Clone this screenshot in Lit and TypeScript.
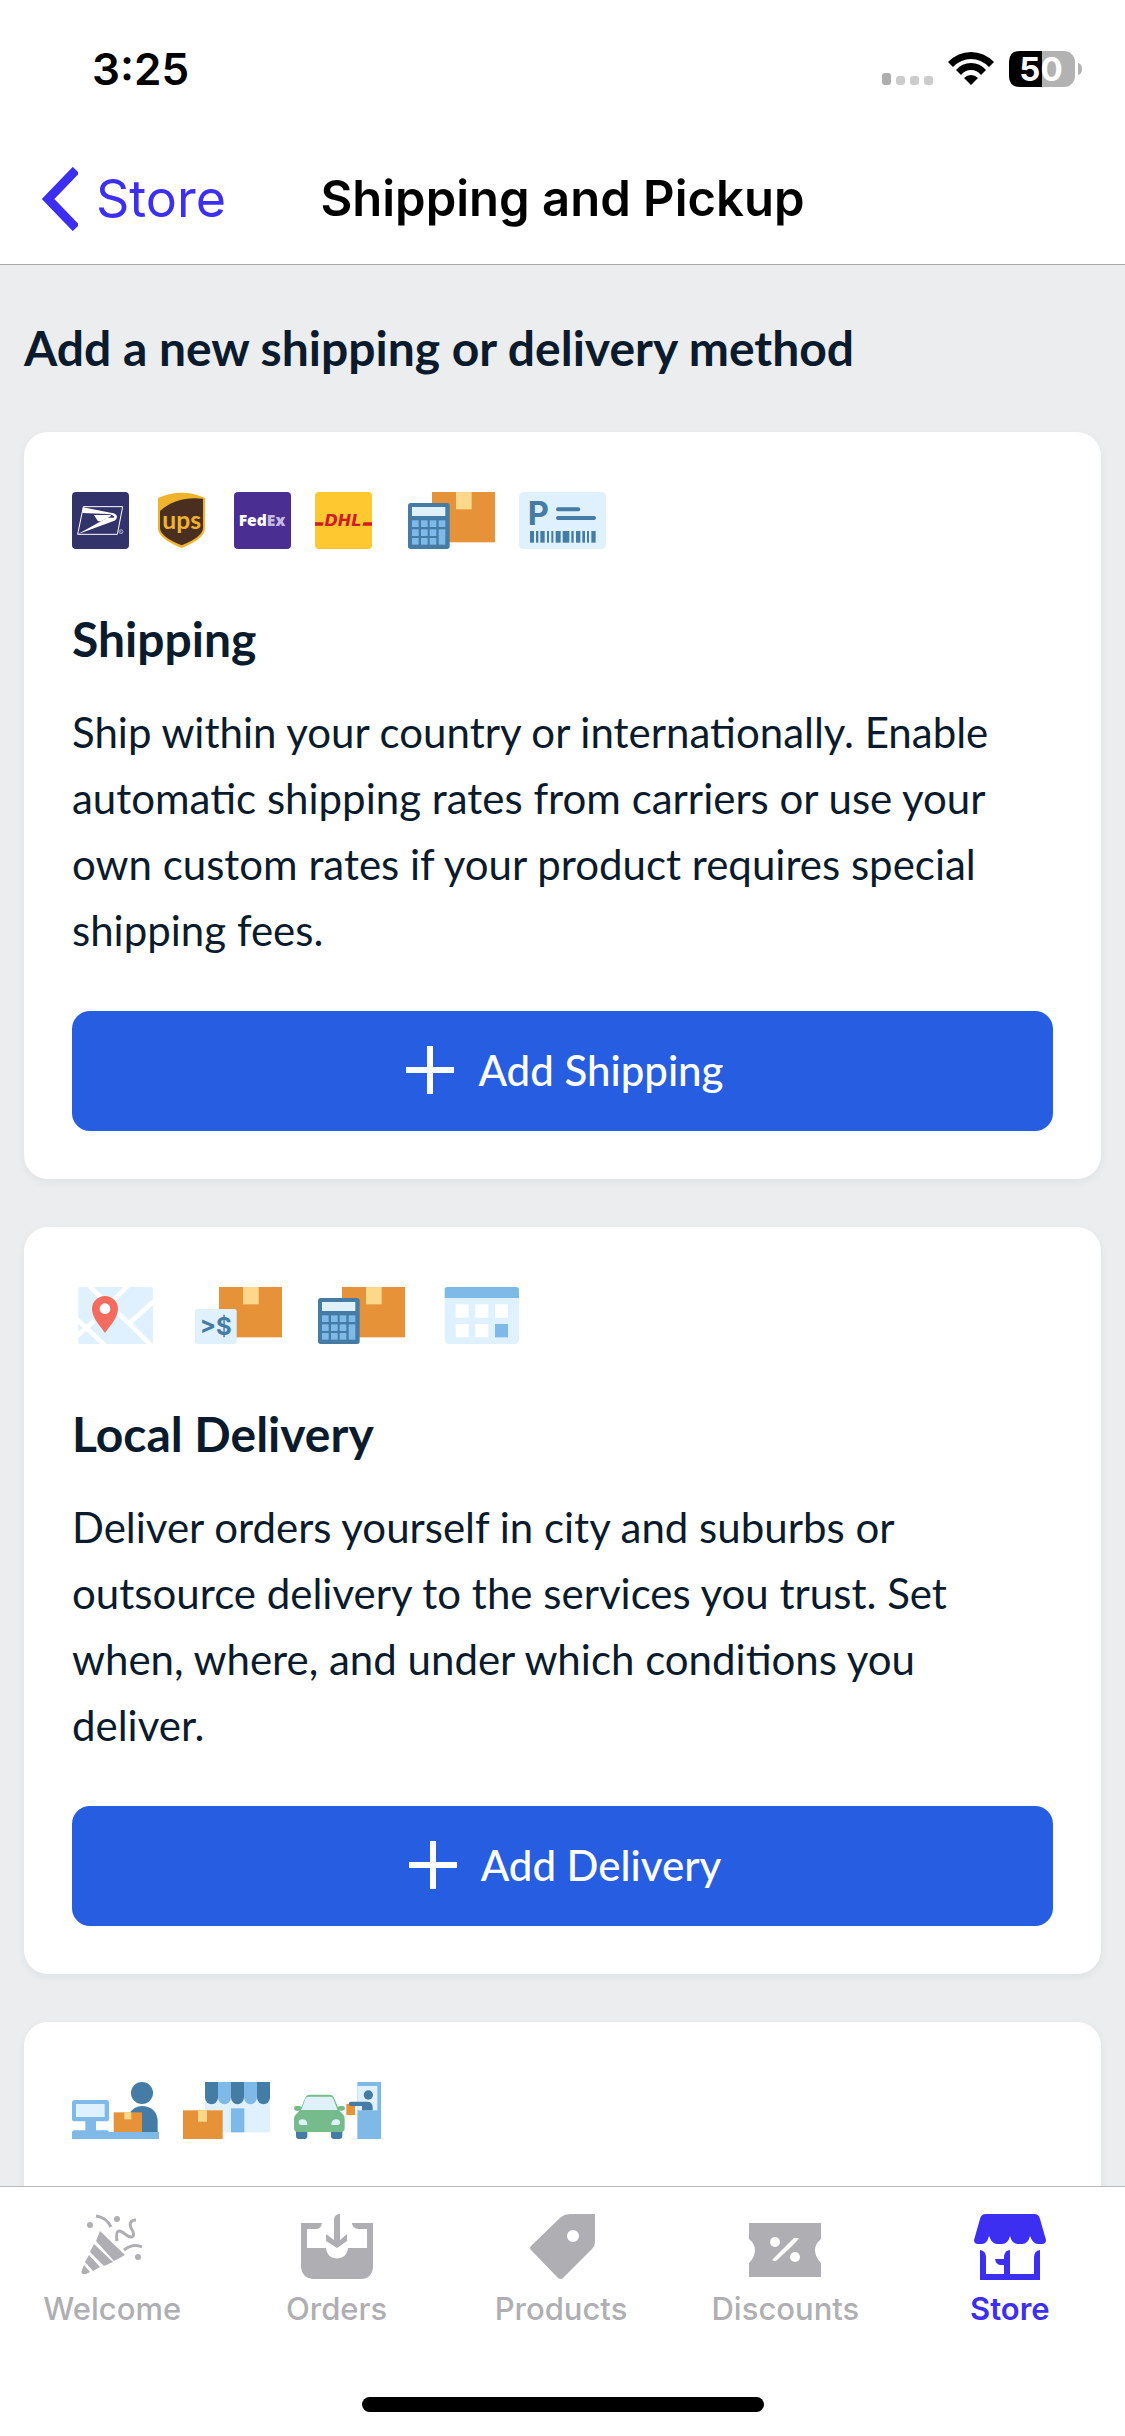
import { LitElement, html, css, svg, nothing, type SVGTemplateResult, type TemplateResult } from "lit";
import { customElement, property } from "lit/decorators.js";

const C = {
  orange: "#e69238",
  tape: "#fbd88a",
  dark: "#457ca5",
  mid: "#7eb9e7",
  light: "#dff1fe",
  green: "#76bb8c",
};

/* Illustrations are drawn on a grid three times finer than their display size. */
const parcel = svg`
  <rect x="72" width="189" height="151" fill=${C.orange} />
  <rect x="144" width="47" height="52" fill=${C.tape} />`;

const keyColumns = [12, 39, 65, 92];
const keyRows = [85, 112, 138];
const calculatorParcel = svg`
  ${parcel}
  <rect y="33" width="125" height="138" rx="8" fill=${C.dark} />
  <rect x="12" y="45" width="100" height="27" fill=${C.light} />
  ${keyRows.map((y, r) =>
    keyColumns.map((x, c) =>
      c === 3 && r > 0
        ? nothing
        : svg`<rect x=${x} y=${y} width="20" height="20" fill=${C.mid} />`
    )
  )}
  <rect x="92" y="112" width="20" height="46" fill=${C.mid} />`;

const barcode = [
  [33, 12], [51, 7], [64, 13], [84, 6], [97, 6], [110, 15], [131, 20],
  [157, 7], [171, 13], [190, 8], [204, 6], [217, 13],
];

const art: Record<string, { w: number; label: string; body: SVGTemplateResult }> = {
  usps: {
    w: 171,
    label: "USPS",
    body: svg`
      <rect width="171" height="171" rx="12" fill="#33336b" />
      <path d="M34 44H152L136 127H17Z" fill="none" stroke="#fff" stroke-width="3" />
      <path d="M33 46L116 62Q134 64 135 74Q135 82 127 86L17 127L106 77H122Q128 77 126 73Q122 67 104 66L31 63Z" fill="#fff" />
      <path d="M66 69H112Q122 71 112 75L86 88H78Z" fill="#fff" />
      <circle cx="147" cy="119" r="6" fill="none" stroke="#d0d0e4" stroke-width="2" />
      <path d="M145 123V115H148Q150 117 148 119H145M147 119L150 123" fill="none" stroke="#d0d0e4" stroke-width="1" />`,
  },
  ups: {
    w: 171,
    label: "UPS",
    body: svg`
      <path d="M15 18Q86 -14 156 18V108Q156 140 86 168Q15 140 15 108Z" fill="#f0b32c" />
      <path d="M21 57Q70 12 150 20V108Q150 134 86 160Q21 134 21 108Z" fill="#4a2f20" />
      <text x="86" y="110" text-anchor="middle" font-family="Lato,sans-serif" font-weight="700" font-size="74" fill="#f0b32c">ups</text>`,
  },
  fedex: {
    w: 171,
    label: "FedEx",
    body: svg`
      <rect width="171" height="171" rx="12" fill="#4b2e92" />
      <text x="84" y="103" text-anchor="middle" font-family="'Open Sans',sans-serif" font-weight="800" font-size="47" fill="#fff">Fed<tspan fill="#c5b9e2">Ex</tspan></text>`,
  },
  dhl: {
    w: 171,
    label: "DHL",
    body: svg`
      <rect width="171" height="171" rx="12" fill="#fdc830" />
      <path d="M0 91H26L23 101H0ZM146 91H171V101H142Z" fill="#d01c1f" />
      <text x="84" y="101" text-anchor="middle" font-family="'DejaVu Sans',sans-serif" font-style="italic" font-weight="700" font-size="48" fill="#d01c1f">DHL</text>`,
  },
  calculator: { w: 261, label: "Calculated rates", body: calculatorParcel },
  postage: {
    w: 261,
    label: "Postage label",
    body: svg`
      <rect width="261" height="171" rx="14" fill=${C.light} />
      <text x="26" y="98" font-family="Inter,sans-serif" font-weight="700" font-size="98" fill=${C.dark}>P</text>
      <path d="M117 52H178M117 78H225" stroke=${C.dark} stroke-width="12" stroke-linecap="round" />
      ${barcode.map(([x, w]) => svg`<rect x=${x} y="117" width=${w} height="35" fill=${C.dark} />`)}`,
  },
  map: {
    w: 261,
    label: "Delivery zone",
    body: svg`
      <rect x="19" width="224" height="171" rx="6" fill=${C.light} />
      <path d="M52 -2L106 48L172 110L236 174M168 -4L120 44M246 42L173 108M14 96L100 176M14 148L66 102" stroke="#fff" stroke-width="14" fill="none" />
      <path d="M99 138C84 116 60 92 60 66A39 39 0 0 1 138 66C138 92 114 116 99 138Z" fill="#f36c5f" />
      <circle cx="99" cy="65" r="16" fill="#fff" />`,
  },
  price: {
    w: 261,
    label: "Rates by subtotal",
    body: svg`
      ${parcel}
      <rect y="66" width="125" height="105" rx="7" fill=${C.light} />
      <text x="62" y="144" text-anchor="middle" font-family="Inter,sans-serif" font-weight="700" font-size="72" fill=${C.dark}>&gt;$</text>`,
  },
  calendar: {
    w: 261,
    label: "Delivery schedule",
    body: svg`
      <path d="M11 30H234V157Q234 171 220 171H25Q11 171 11 157Z" fill=${C.light} />
      <path d="M11 33V8Q11 0 19 0H226Q234 0 234 8V33Z" fill=${C.mid} />
      ${[52, 111].map((y, r) =>
        [44, 103, 162].map(
          (x, c) => svg`<rect x=${x} y=${y} width="39" height="40" fill=${r + c === 3 ? C.mid : "#fff"} />`
        )
      )}`,
  },
  counter: {
    w: 261,
    label: "Pickup at the counter",
    body: svg`
      <rect y="54" width="111" height="64" rx="8" fill=${C.mid} />
      <rect x="12" y="66" width="86" height="39" fill=${C.light} />
      <path d="M40 116H72V145H105Q111 145 111 151H0Q0 145 8 145H40Z" fill=${C.mid} />
      <circle cx="210" cy="33" r="33" fill=${C.dark} />
      <path d="M172 96Q184 72 212 72Q257 76 257 120V152H172Z" fill=${C.dark} />
      <rect x="125" y="91" width="85" height="60" fill=${C.orange} />
      <rect x="157" y="91" width="21" height="21" fill=${C.tape} />
      <rect y="150" width="261" height="21" fill=${C.mid} />`,
  },
  shop: {
    w: 261,
    label: "Pickup at the shop",
    body: svg`
      <rect x="66" width="195" height="151" fill=${C.light} />
      <rect x="144" y="79" width="40" height="72" fill=${C.mid} />
      ${[0, 1, 2, 3, 4].map((i) => {
        const x = 66 + i * 39;
        return svg`<path d=${`M${x} 0h39v46a19 20 0 0 1 -39 0Z`} fill=${i % 2 ? C.mid : C.dark} />`;
      })}
      <rect y="85" width="119" height="86" fill=${C.orange} />
      <rect x="45" y="85" width="27" height="34" fill=${C.tape} />`,
  },
  curbside: {
    w: 261,
    label: "Curbside pickup",
    body: svg`
      <rect x="6" y="140" width="34" height="31" rx="9" fill=${C.dark} />
      <rect x="111" y="140" width="34" height="31" rx="9" fill=${C.dark} />
      <path d="M16 88L34 47Q38 38 46 38H108Q116 38 120 47L137 88Z" fill=${C.green} />
      <path d="M21 85L34 51Q37 44 44 44H109Q116 44 118 51L131 85Z" fill=${C.light} />
      <rect y="72" width="22" height="14" rx="7" fill=${C.green} />
      <rect x="131" y="72" width="22" height="14" rx="7" fill=${C.green} />
      <path d="M18 84H134L148 98Q152 102 152 110V138Q152 150 140 150H12Q0 150 0 138V110Q0 102 5 98Z" fill=${C.green} />
      <path d="M14 124Q13 111 26 112Q40 113 40 129H24Q15 130 14 124ZM138 124Q139 111 126 112Q112 113 112 129H128Q137 130 138 124Z" fill=${C.light} />
      <rect x="190" width="71" height="171" fill=${C.mid} />
      <rect x="190" y="12" width="60" height="73" fill=${C.light} />
      <rect x="157" y="66" width="26" height="33" fill=${C.orange} />
      <circle cx="223" cy="39" r="14" fill=${C.dark} />
      <path d="M171 59H222Q236 61 236 76V85H204V72H171A6 6 0 0 1 171 59Z" fill=${C.dark} />`,
  },
};

const tabIcons: Record<string, SVGTemplateResult> = {
  Welcome: svg`
    <path d="M24 20L49 44L38 50L20 30ZM18 33L37 51L28 55L14 41ZM13 44L24 56L17 60L9 51ZM8 54L14 61L10 63Q4 64 6 59Z" fill="currentColor" />
    <circle cx="14" cy="14" r="3" fill="currentColor" />
    <circle cx="41" cy="8" r="3" fill="currentColor" />
    <circle cx="62" cy="46" r="3" fill="currentColor" />
    <path d="M20 5Q30 6 35 16M41 30C39 17 44 19 49 23C57 29 60 25 55 17C53 12 55 9 60 9M48 39Q57 32 66 36" fill="none" stroke="currentColor" stroke-width="3" />`,
  Orders: svg`
    <path d="M0 12H21Q20 18 15 18H6V37H25C26 51 46 51 47 37H66V18H57Q51 17 51 12H72V56Q71 68 60 68H12Q1 67 0 56Z" fill="currentColor" />
    <path d="M33 8Q34 3 39 3V29L46 23V30L36 37L25 30V23L33 29Z" fill="currentColor" />`,
  Products: svg`
    <path fill-rule="evenodd" d="M70 3V31Q70 35 67 38L38 67Q36 69 33 67L6 39Q4 37 6 35L36 6Q40 3 45 3ZM48 19A6 6 0 1 0 48 31A6 6 0 1 0 48 19Z" fill="currentColor" />`,
  Discounts: svg`
    <path d="M0 12H72V28Q66 33 66 39Q66 46 72 52V66H0V52Q6 46 6 39Q6 33 0 28Z" fill="currentColor" />
    <circle cx="26" cy="31" r="5" fill="#fff" />
    <circle cx="46" cy="46" r="5" fill="#fff" />
    <path d="M23 49L45 27H50Q49 30 28 49Q26 51 23 49Z" fill="#fff" />`,
  Store: svg`
    <path d="M12 3H60Q65 3 66 8L72 29Q72 33 68 33H64Q59 33 56 25Q54 33 48 33H44Q38 33 36 25Q34 33 28 33H23Q18 33 15 25Q13 33 8 33H4Q0 33 0 29L6 8Q7 3 12 3Z" fill="currentColor" />
    <path d="M6 39Q12 40 12 46V63H30V54H27Q22 54 21 48H30V45Q31 39 36 39V63H60V46Q60 40 66 39V69H6Z" fill="currentColor" />`,
};

@customElement("status-bar")
class StatusBar extends LitElement {
  static styles = css`
    :host {
      display: flex;
      align-items: center;
      justify-content: space-between;
      height: 126px;
      padding: 6px 43px 0 92px;
      color: #000;
    }
    .time {
      font-size: 44px;
      line-height: 54px;
      font-weight: 600;
    }
    .signals {
      display: flex;
      align-items: center;
      gap: 15px;
    }
    svg {
      display: block;
    }
  `;

  render() {
    return html`
      <span class="time">3:25</span>
      <div class="signals">
        <svg width="51" height="36" viewBox="0 0 51 36" role="img" aria-label="No signal">
          <rect y="22" width="9" height="12" rx="3" fill="#aeaeae" />
          <rect x="14" y="25" width="9" height="9" rx="3" fill="#cccccc" />
          <rect x="28" y="25" width="9" height="9" rx="3" fill="#cccccc" />
          <rect x="42" y="25" width="9" height="9" rx="3" fill="#cccccc" />
        </svg>
        <svg width="46" height="36" viewBox="0 0 46 36" role="img" aria-label="Wi-Fi">
          <path d="M0 11Q10 1 23 1T46 11L41 16Q33 8 23 8T5 16Z" />
          <path d="M8 19Q14 12 23 12T38 19L33 24Q29 19 23 19T13 24Z" />
          <path d="M16 27Q19 24 23 24T30 27L23 34Z" />
        </svg>
        <svg width="73" height="52" viewBox="0 -8 73 52" role="img" aria-label="Battery 50 percent">
          <rect width="66" height="36" rx="11" fill="#b2b2b2" />
          <path d="M11 0H33V36H11Q0 36 0 25V11Q0 0 11 0Z" />
          <path d="M69 12Q73 13 73 18T69 24Z" fill="#b2b2b2" />
          <text x="32" y="30" text-anchor="middle" font-family="Inter,sans-serif" font-weight="700" font-size="33" fill="#fff">50</text>
        </svg>
      </div>
    `;
  }
}

@customElement("nav-header")
class NavHeader extends LitElement {
  static styles = css`
    :host {
      display: grid;
      grid-template-columns: 1fr auto 1fr;
      align-items: center;
      height: 130px;
      padding: 2px 40px 0;
      border-bottom: 1px solid #a9a9ab;
    }
    .back {
      display: flex;
      align-items: center;
      gap: 18px;
      color: #3d2ff2;
      font-size: 52px;
      line-height: 62px;
      text-decoration: none;
    }
    .title {
      margin: 0;
      font-size: 49px;
      line-height: 62px;
      font-weight: 600;
      color: #000;
    }
  `;

  render() {
    return html`
      <a class="back" href="#store">
        <svg width="38" height="64" viewBox="0 0 38 64" aria-hidden="true">
          <path d="M36 3L8 32L36 61" fill="none" stroke="currentColor" stroke-width="9" />
        </svg>
        Store
      </a>
      <h1 class="title">Shipping and Pickup</h1>
    `;
  }
}

@customElement("method-card")
class MethodCard extends LitElement {
  @property() heading = "";
  @property() text = "";
  @property() action = "";
  @property({ attribute: false }) groups: string[][] = [];

  static styles = css`
    :host {
      display: block;
      padding: 60px 48px 48px;
      border-radius: 24px;
      background: #fff;
      box-shadow: 0 3px 9px rgba(40, 50, 50, 0.06);
    }
    .groups {
      display: flex;
      gap: 36px;
    }
    .group {
      display: flex;
      gap: 24px;
    }
    svg {
      display: block;
    }
    .heading {
      margin: 60px 0 30px;
      font-size: 48px;
      line-height: 60px;
      font-weight: 700;
    }
    .text {
      margin: 0 0 48px;
      font-size: 42px;
      line-height: 66px;
    }
    .action {
      display: flex;
      align-items: center;
      justify-content: center;
      gap: 24px;
      width: 100%;
      height: 120px;
      padding: 0 0 3px 5px;
      border: 0;
      border-radius: 18px;
      background: #275de0;
      color: #fff;
      font: inherit;
      font-size: 42px;
      font-weight: 500;
    }
  `;

  render(): TemplateResult {
    return html`
      <div class="groups">
        ${this.groups.map(
          (names) => html`<div class="group">
            ${names.map((name) => {
              const a = art[name];
              return html`<svg width=${a.w / 3} height="57" viewBox="0 0 ${a.w} 171" role="img" aria-label=${a.label}>
                ${a.body}
              </svg>`;
            })}
          </div>`
        )}
      </div>
      ${this.heading
        ? html`<h3 class="heading">${this.heading}</h3>
            <p class="text">${this.text}</p>
            <button class="action" type="button">
              <svg width="48" height="48" viewBox="0 0 48 48" aria-hidden="true">
                <path d="M24 0V48M0 24H48" stroke="currentColor" stroke-width="6" />
              </svg>
              ${this.action}
            </button>`
        : nothing}
    `;
  }
}

@customElement("tab-bar")
class TabBar extends LitElement {
  @property() active = "";

  static styles = css`
    :host {
      display: flex;
      flex-direction: column;
      align-items: center;
      gap: 70px;
      padding: 24px 0;
      border-top: 1px solid #b9bab9;
      background: #fff;
    }
    .tabs {
      display: grid;
      grid-template-columns: repeat(5, 1fr);
      align-self: stretch;
      padding-right: 3px;
    }
    .tab {
      display: flex;
      flex-direction: column;
      align-items: center;
      gap: 8px;
      color: #afafb3;
      font-size: 31px;
      line-height: 36px;
      font-weight: 500;
      text-decoration: none;
    }
    .tab.active {
      color: #3d2ff2;
      font-weight: 600;
    }
    .home {
      width: 402px;
      height: 15px;
      border-radius: 8px;
      background: #000;
    }
  `;

  render() {
    return html`
      <nav class="tabs">
        ${Object.entries(tabIcons).map(
          ([name, icon]) => html`<a
            class=${name === this.active ? "tab active" : "tab"}
            href="#${name.toLowerCase()}"
          >
            <svg width="72" height="72" viewBox="0 0 72 72" aria-hidden="true">${icon}</svg>
            ${name}
          </a>`
        )}
      </nav>
      <div class="home"></div>
    `;
  }
}

@customElement("app-root")
class AppRoot extends LitElement {
  static styles = css`
    :host {
      display: flex;
      flex-direction: column;
      height: 100vh;
      background: #fff;
      font-family: Inter, "Liberation Sans", sans-serif;
    }
    status-bar,
    nav-header,
    tab-bar {
      flex: none;
    }
    .content {
      flex: 1;
      min-height: 0;
      overflow-y: auto;
      scrollbar-width: none;
      display: flex;
      flex-direction: column;
      gap: 48px;
      padding: 53px 24px 0;
      background: #ebedef;
      color: #0b1b2e;
      font-family: Lato, sans-serif;
    }
    .content > * {
      flex: none;
    }
    .heading {
      margin: 0 0 6px;
      font-size: 48px;
      line-height: 60px;
      font-weight: 700;
    }
    .upcoming {
      min-height: 120px;
    }
  `;

  render() {
    return html`
      <status-bar></status-bar>
      <nav-header></nav-header>
      <main class="content">
        <h2 class="heading">Add a new shipping or delivery method</h2>
        <method-card
          heading="Shipping"
          text="Ship within your country or internationally. Enable automatic shipping rates from carriers or use your own custom rates if your product requires special shipping fees."
          action="Add Shipping"
          .groups=${[["usps", "ups", "fedex", "dhl"], ["calculator", "postage"]]}
        ></method-card>
        <method-card
          heading="Local Delivery"
          text="Deliver orders yourself in city and suburbs or outsource delivery to the services you trust. Set when, where, and under which conditions you deliver."
          action="Add Delivery"
          .groups=${[["map"], ["price"], ["calculator"], ["calendar"]]}
        ></method-card>
        <method-card class="upcoming" .groups=${[["counter", "shop", "curbside"]]}></method-card>
      </main>
      <tab-bar active="Store"></tab-bar>
    `;
  }
}
